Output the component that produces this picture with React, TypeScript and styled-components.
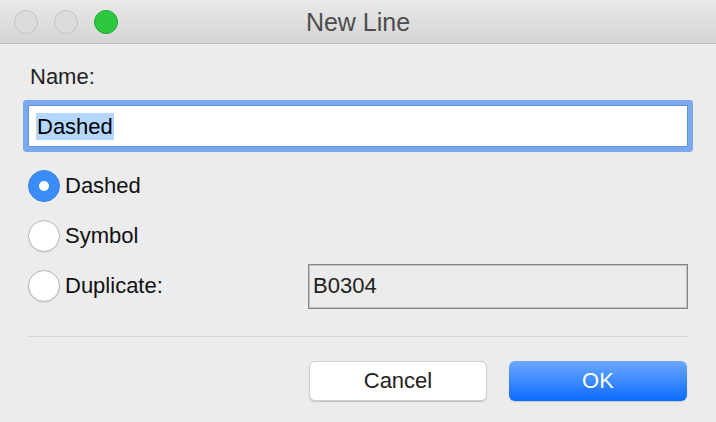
import React from "react";
import styled, { createGlobalStyle } from "styled-components";

const Global = createGlobalStyle`
  html, body { margin: 0; padding: 0; background: #ececec; overflow: hidden; }
  body { font-family: "Liberation Sans", Arial, sans-serif; }
  * { box-sizing: border-box; }
`;

const Window = styled.div`
  width: 716px;
  height: 422px;
  background: #ececec;
  display: flex;
  flex-direction: column;
  font-family: "Liberation Sans", Arial, sans-serif;
  color: #1e1e1e;
`;

const TitleBar = styled.div`
  position: relative;
  height: 44px;
  flex: 0 0 44px;
  background: linear-gradient(#e9e9e9, #d4d4d4);
  border-bottom: 1px solid #bdbdbd;
  display: flex;
  align-items: center;
  justify-content: center;
`;

const Lights = styled.div`
  position: absolute;
  left: 14px;
  top: 10px;
  display: flex;
  gap: 16px;
`;

const Light = styled.span<{ $color: string; $edge: string }>`
  width: 24px;
  height: 24px;
  border-radius: 50%;
  background: ${(p) => p.$color};
  border: 1px solid ${(p) => p.$edge};
`;

const Title = styled.div`
  font-size: 25px;
  color: #4d4d4d;
  line-height: 28px;
  margin-top: 1px;
`;

const Content = styled.div`
  flex: 1;
  display: flex;
  flex-direction: column;
  padding: 20px 28px 0 28px;
`;

const Label = styled.div`
  font-size: 22px;
  line-height: 26px;
  color: #222;
  padding-left: 2px;
`;

const NameField = styled.div`
  margin-top: 15px;
  height: 42px;
  background: #fff;
  border: 1px solid #5d8fdc;
  border-radius: 1px;
  box-shadow: 0 0 0 5px #7aa9f0;
  display: flex;
  align-items: center;
  padding-left: 7px;
  font-size: 22px;
  color: #000;
`;

const Selected = styled.span`
  background: #b3d7ff;
  line-height: 27px;
  padding: 0 1px;
`;

const RadioGroup = styled.div`
  margin-top: 14px;
  display: flex;
  flex-direction: column;
`;

const Row = styled.div`
  height: 50px;
  display: flex;
  align-items: center;
`;

const Radio = styled.span<{ $on?: boolean }>`
  width: 32px;
  height: 32px;
  border-radius: 50%;
  flex: 0 0 32px;
  display: flex;
  align-items: center;
  justify-content: center;
  background: ${(p) => (p.$on ? "#3c8cf7" : "#ffffff")};
  border: 1px solid ${(p) => (p.$on ? "#3a86ef" : "#b5b5b5")};
  box-shadow: ${(p) => (p.$on ? "none" : "0 1px 1px rgba(0,0,0,0.08)")};
`;

const Dot = styled.span`
  width: 10px;
  height: 10px;
  border-radius: 50%;
  background: #fff;
`;

const RadioText = styled.span`
  margin-left: 5px;
  font-size: 22px;
  line-height: 26px;
  color: #111;
`;

const DupField = styled.div`
  margin-left: auto;
  width: 380px;
  height: 45px;
  background: #ebebeb;
  border: 1px solid #868686;
  box-shadow: inset 0 0 0 1px #c2c2c2;
  display: flex;
  align-items: center;
  padding-left: 4px;
  font-size: 22px;
  color: #222;
`;

const Separator = styled.div`
  margin-top: 25px;
  height: 1px;
  background: #d5d5d5;
`;

const Buttons = styled.div`
  margin-top: 24px;
  display: flex;
  justify-content: flex-end;
  gap: 22px;
  padding-right: 1px;
`;

const Button = styled.button<{ $primary?: boolean }>`
  width: 178px;
  height: 40px;
  border-radius: 6px;
  font-family: "Liberation Sans", Arial, sans-serif;
  font-size: 22px;
  display: flex;
  align-items: center;
  justify-content: center;
  padding: 0;
  border: ${(p) => (p.$primary ? "none" : "1px solid #cfcfcf")};
  color: ${(p) => (p.$primary ? "#ffffff" : "#222")};
  background: ${(p) =>
    p.$primary ? "linear-gradient(#6ca8ff, #0a6bff)" : "#ffffff"};
  box-shadow: ${(p) =>
    p.$primary ? "0 1px 1px rgba(0,0,0,0.15)" : "0 1px 1px rgba(0,0,0,0.18)"};
`;

export default function App() {
  return (
    <Window>
      <Global />
      <TitleBar>
        <Lights>
          <Light $color="#dcdcdc" $edge="#c2c2c2" />
          <Light $color="#dcdcdc" $edge="#c2c2c2" />
          <Light $color="#2bc840" $edge="#21a634" />
        </Lights>
        <Title>New Line</Title>
      </TitleBar>
      <Content>
        <Label>Name:</Label>
        <NameField>
          <Selected>Dashed</Selected>
        </NameField>
        <RadioGroup>
          <Row>
            <Radio $on>
              <Dot />
            </Radio>
            <RadioText>Dashed</RadioText>
          </Row>
          <Row>
            <Radio />
            <RadioText>Symbol</RadioText>
          </Row>
          <Row>
            <Radio />
            <RadioText>Duplicate:</RadioText>
            <DupField>B0304</DupField>
          </Row>
        </RadioGroup>
        <Separator />
        <Buttons>
          <Button>Cancel</Button>
          <Button $primary>OK</Button>
        </Buttons>
      </Content>
    </Window>
  );
}
